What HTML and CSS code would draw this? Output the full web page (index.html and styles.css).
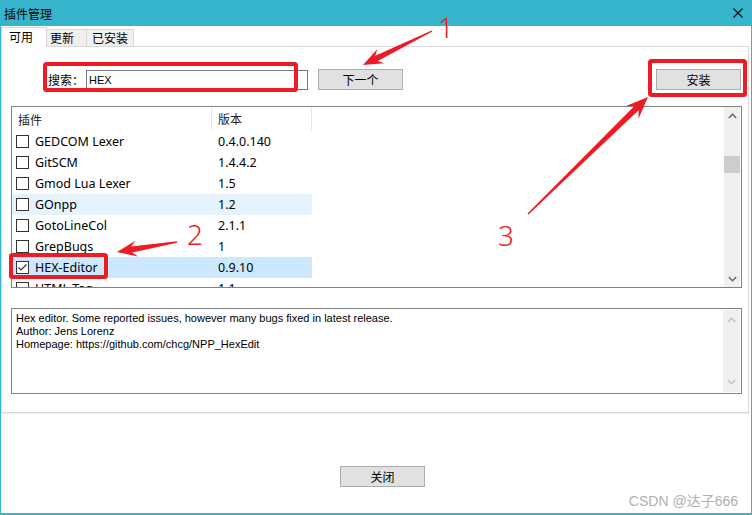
FILE: index.html
```html
<!DOCTYPE html>
<html lang="zh-CN">
<head>
    <meta charset="UTF-8">
    <meta name="viewport" content="width=device-width, initial-scale=1.0">
    <title>插件管理</title>
    <link rel="stylesheet" href="styles.css">
</head>
<body>

<div class="screen">
    <div class="window">
        <div class="titlebar">
            <span class="title">插件管理</span>
            <svg class="close" width="10" height="10" viewBox="0 0 10 10">
                <path d="M0.5 0.5L9.5 9.5M9.5 0.5L0.5 9.5" stroke="#000" stroke-width="1.1" fill="none"/>
            </svg>
        </div>

        <div class="tabs">
            <div class="tab active">可用</div>
            <div class="tab tab-update">更新</div>
            <div class="tab tab-installed">已安装</div>
            <div class="tab-fill"></div>
        </div>

        <div class="panel">
            <div class="toolbar">
                <label class="search-label">搜索：</label>
                <input class="search-input" type="text" value="HEX">
                <button class="btn next-btn">下一个</button>
                <button class="btn install-btn">安装</button>
            </div>

            <div class="list">
                <div class="list-body">
                    <div class="row head">
                        <div class="c1">插件</div>
                        <div class="c2">版本</div>
                    </div>
                    <div class="row">
                        <div class="c1"><span class="check"></span>GEDCOM Lexer</div>
                        <div class="c2">0.4.0.140</div>
                    </div>
                    <div class="row">
                        <div class="c1"><span class="check"></span>GitSCM</div>
                        <div class="c2">1.4.4.2</div>
                    </div>
                    <div class="row">
                        <div class="c1"><span class="check"></span>Gmod Lua Lexer</div>
                        <div class="c2">1.5</div>
                    </div>
                    <div class="row hover">
                        <div class="c1"><span class="check"></span>GOnpp</div>
                        <div class="c2">1.2</div>
                    </div>
                    <div class="row">
                        <div class="c1"><span class="check"></span>GotoLineCol</div>
                        <div class="c2">2.1.1</div>
                    </div>
                    <div class="row">
                        <div class="c1"><span class="check"></span>GrepBugs</div>
                        <div class="c2">1</div>
                    </div>
                    <div class="row selected">
                        <div class="c1">
                            <span class="check">
                                <svg width="11" height="11" viewBox="0 0 11 11"><path d="M1.5 5.5L4 8L9.5 2.5" stroke="#333" stroke-width="1.2" fill="none"/></svg>
                            </span>HEX-Editor
                        </div>
                        <div class="c2">0.9.10</div>
                    </div>
                    <div class="row">
                        <div class="c1"><span class="check"></span>HTML Tag</div>
                        <div class="c2">1.1</div>
                    </div>
                </div>
                <div class="scrollbar">
                    <svg class="arrow" width="9" height="6" viewBox="0 0 9 6"><path d="M0.8 5L4.5 1.2L8.2 5" stroke="#606060" stroke-width="1.3" fill="none"/></svg>
                    <div class="thumb"></div>
                    <svg class="arrow down" width="9" height="6" viewBox="0 0 9 6"><path d="M0.8 1L4.5 4.8L8.2 1" stroke="#606060" stroke-width="1.3" fill="none"/></svg>
                </div>
            </div>

            <div class="desc">
                <div class="desc-text">
                    Hex editor. Some reported issues, however many bugs fixed in latest release.<br>
                    Author: Jens Lorenz<br>
                    Homepage: https://github.com/chcg/NPP_HexEdit
                </div>
                <div class="scrollbar disabled">
                    <svg class="arrow" width="9" height="6" viewBox="0 0 9 6"><path d="M0.8 5L4.5 1.2L8.2 5" stroke="#c0c0c0" stroke-width="1.3" fill="none"/></svg>
                    <svg class="arrow down" width="9" height="6" viewBox="0 0 9 6"><path d="M0.8 1L4.5 4.8L8.2 1" stroke="#c0c0c0" stroke-width="1.3" fill="none"/></svg>
                </div>
            </div>
        </div>

        <div class="footer">
            <button class="btn close-btn">关闭</button>
        </div>
    </div>

    <!-- 标注 -->
    <svg class="annot" width="752" height="515" viewBox="0 0 752 515">
        <g fill="none" stroke="#ed1c24" stroke-width="4">
            <rect x="45" y="64" width="251" height="26" rx="1.5"/>
            <rect x="650" y="61" width="95" height="34" rx="1.5"/>
            <rect x="11" y="255" width="95" height="22" rx="1.5"/>
        </g>
        <g fill="#ed1c24">
            <polygon points="363,65 384.4,63.3 377.8,61.1 432.3,31.6 431.7,30.4 375.2,55.7 377.4,49"/>
            <polygon points="117,252 138,256.6 132.3,252.5 177.1,242.7 176.9,241.3 131.3,246.5 135.4,240.8"/>
            <polygon points="648,97 638.5,118.8 638.6,110.3 528.5,214.5 527.5,213.5 634.4,106.1 626,105.9"/>
        </g>
        <g class="num" fill="#ed1c24" text-anchor="middle">
            <text x="446" y="38">1</text>
            <text x="195" y="245">2</text>
            <text x="506" y="246">3</text>
        </g>
    </svg>

    <span class="watermark">CSDN @达子666</span>
</div>

</body>
</html>
```

FILE: styles.css
```css
* {
    box-sizing: border-box;
}

body {
    margin: 0;
    font-family: "Noto Sans", "Noto Sans CJK SC", sans-serif;
    font-size: 12px;
    color: #000;
    background: #fff;
}

.screen {
    position: relative;
    width: 752px;
    height: 515px;
}

.window {
    width: 752px;
    height: 515px;
    border: 1px solid #35b4cb;
    border-top: 0;
    border-bottom-width: 2px;
    display: flex;
    flex-direction: column;
    background: #fff;
}

.titlebar {
    height: 26px;
    flex: none;
    background: #35b4cb;
    display: flex;
    align-items: center;
    justify-content: space-between;
    padding: 0 8px 0 3px;
}

.title {
    font-family: "Noto Sans CJK SC", sans-serif;
    font-size: 12px;
}

/* 选项卡 */
.tabs {
    height: 21px;
    flex: none;
    display: flex;
    align-items: flex-end;
}

.tab {
    height: 18px;
    border: 1px solid #d9d9d9;
    border-left: 0;
    background: #f0f0f0;
    font-family: "Noto Sans CJK SC", sans-serif;
    font-size: 12px;
    line-height: 16px;
}

.tab.active {
    width: 46px;
    height: 20px;
    border-left: 1px solid #d9d9d9;
    border-bottom: 0;
    background: #fff;
    padding-left: 7px;
    line-height: 17px;
}

.tab-update {
    width: 40px;
    padding-left: 3px;
}

.tab-installed {
    width: 47px;
    padding-left: 5px;
}

.tab-fill {
    flex: 1;
    height: 1px;
    margin-right: 2px;
    border-bottom: 1px solid #d9d9d9;
}

.panel {
    height: 366px;
    flex: none;
    margin-right: 2px;
    border: 1px solid #d9d9d9;
    border-top: 0;
    box-shadow: 0 1px 0 #f0f0f0;
    padding: 22px 6px 0 9px;
}

.toolbar {
    height: 21px;
    display: flex;
    align-items: center;
    padding: 0 1px 0 37px;
}

.search-label {
    width: 36px;
    margin-right: 2px;
    font-family: "Noto Sans CJK SC", sans-serif;
    font-size: 12px;
}

.search-input {
    width: 222px;
    height: 20px;
    margin: 0;
    border: 1px solid #7a7a7a;
    padding: 0 2px;
    font-family: "Liberation Sans", sans-serif;
    font-size: 11px;
    color: #000;
    outline: none;
}

.btn {
    width: 85px;
    height: 21px;
    margin: 0;
    padding: 0;
    border: 1px solid #adadad;
    background-color: #e1e1e1;
    font-family: "Noto Sans CJK SC", sans-serif;
    font-size: 12px;
    color: #000;
}

.next-btn {
    margin-left: 10px;
}

.install-btn {
    margin-left: auto;
}

/* 插件列表 */
.list {
    margin-top: 16px;
    height: 182px;
    border: 1px solid #828282;
    display: flex;
    overflow: hidden;
}

.list-body {
    flex: 1;
    overflow: hidden;
}

.row {
    width: 300px;
    height: 21px;
    display: flex;
    align-items: center;
    font-size: 12.5px;
}

.row.head {
    height: 24px;
    font-family: "Noto Sans CJK SC", sans-serif;
    font-size: 12px;
    color: #222;
}

.row.head .c1,
.row.head .c2 {
    height: 24px;
    line-height: 23px;
    padding-left: 6px;
    border-right: 1px solid #e5e5e5;
}

.row.hover {
    background-color: #e5f3ff;
}

.row.selected {
    background-color: #cce8ff;
}

.c1 {
    width: 200px;
    display: flex;
    align-items: center;
    padding-left: 4px;
    white-space: nowrap;
}

.c2 {
    width: 100px;
    padding-left: 6px;
}

.check {
    width: 13px;
    height: 13px;
    margin-right: 6px;
    border: 1px solid #333;
    background: #fff;
    display: flex;
    align-items: center;
    justify-content: center;
}

.scrollbar {
    width: 17px;
    flex: none;
    background: #f0f0f0;
    display: flex;
    flex-direction: column;
    align-items: center;
    padding: 6px 0 5px;
}

.list .scrollbar {
    width: 16px;
    margin-right: 1px;
}

.thumb {
    width: 16px;
    height: 17px;
    margin-top: 37px;
    background: #cdcdcd;
}

.arrow.down {
    margin-top: auto;
}

/* 描述 */
.desc {
    margin-top: 20px;
    height: 86px;
    border: 1px solid #828282;
    padding: 1px;
    display: flex;
}

.desc-text {
    flex: 1;
    padding: 2px 3px;
    font-family: "Liberation Sans", sans-serif;
    font-size: 11px;
    line-height: 13px;
}

.desc .scrollbar {
    padding: 7px 0 7px;
}

.footer {
    flex: 1;
    padding: 53px 0 0 339px;
}

.annot {
    position: absolute;
    top: 0;
    left: 0;
    pointer-events: none;
}

.num {
    font-family: "Noto Sans", sans-serif;
    font-size: 28px;
    font-weight: 300;
}

.watermark {
    position: absolute;
    right: 14px;
    bottom: 6px;
    font-family: "Liberation Sans", "Noto Sans CJK SC", sans-serif;
    font-size: 14px;
    line-height: 16px;
    color: #b0b0b0;
}
```
